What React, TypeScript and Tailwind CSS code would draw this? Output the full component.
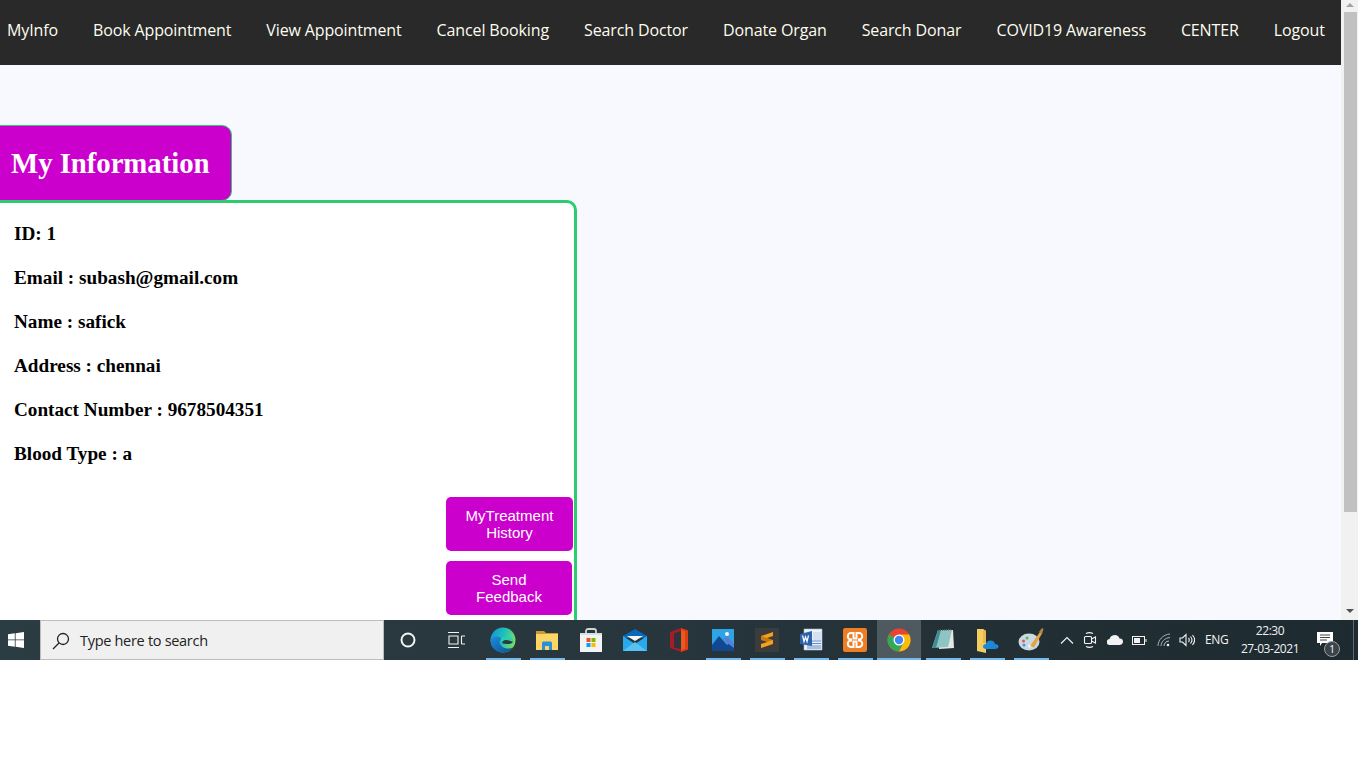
import React from "react";

const navItems = ["MyInfo","Book Appointment","View Appointment","Cancel Booking","Search Doctor","Donate Organ","Search Donar","COVID19 Awareness","CENTER","Logout"];
const info = ["ID: 1","Email : subash@gmail.com","Name : safick","Address : chennai","Contact Number : 9678504351","Blood Type : a"];

const Edge = () => (
  <svg width="26" height="26" viewBox="0 0 26 26">
    <defs>
      <linearGradient id="e1" x1="0" y1="0.2" x2="1" y2="0.5"><stop offset="0" stopColor="#1593dd"/><stop offset="0.55" stopColor="#22c3b4"/><stop offset="1" stopColor="#7ddb62"/></linearGradient>
      <linearGradient id="e2" x1="0" y1="0" x2="1" y2="1"><stop offset="0" stopColor="#1c8fdc"/><stop offset="1" stopColor="#0c4f96"/></linearGradient>
    </defs>
    <circle cx="13" cy="13" r="12.500" fill="url(#e1)"/>
    <path d="M.5 13C.5 20 6 25.500 13 25.500c4 0 7.500-1.800 10-5-3 1.500-8 1.500-11-1-3-2.500-3-6-.5-8C9 8.500 3 8.500.5 13z" fill="url(#e2)"/>
    <path d="M11.500 11.500c2-2 7-2.500 10-.5 1.500 1 2 2.500 1.500 4-2-2-5-3-7.500-2.500-1.500.3-2.500 1.500-2.500 3-.8-1.200-2-2.500-1.500-4z" fill="#25d0b8"/>
    <path d="M12 16c.5-2 2-3 4-3 2.500 0 5 1 7 2-1 1.500-3 2-5 2-2.500 0-4.500-.3-6-1z" fill="#2a3a42"/>
  </svg>
);
const Folder = () => (
  <svg width="24" height="24" viewBox="0 0 24 24">
    <path d="M1 3h8l2 2h12v3H1z" fill="#c99a33"/>
    <rect x="1" y="6" width="22" height="16" fill="#fbd568"/>
    <path d="M7 22v-7a1.500 1.500 0 0 1 1.500-1.500h7A1.500 1.500 0 0 1 17 15v7h-3v-4h-4v4z" fill="#2d8fd5"/>
  </svg>
);
const Store = () => (
  <svg width="24" height="26" viewBox="0 0 24 26">
    <path d="M7 7V4a2 2 0 0 1 2-2h6a2 2 0 0 1 2 2v3" fill="none" stroke="#d4d4d4" strokeWidth="1.800"/>
    <rect x="1" y="6" width="22" height="19" fill="#f3f3f3"/>
    <rect x="1" y="6" width="22" height="2" fill="#dedede"/>
    <rect x="7.500" y="11" width="4" height="4" fill="#f25022"/>
    <rect x="12.500" y="11" width="4" height="4" fill="#7fba00"/>
    <rect x="7.500" y="16" width="4" height="4" fill="#00a4ef"/>
    <rect x="12.500" y="16" width="4" height="4" fill="#ffb900"/>
  </svg>
);
const Mail = () => (
  <svg width="24" height="24" viewBox="0 0 24 24">
    <path d="M0 8 12 1l12 7v2H0z" fill="#0a68b8"/>
    <path d="M4 8h16l-8 5z" fill="#f4f7fa"/>
    <path d="M0 8l12 8 12-8v15H0z" fill="#27a9ec"/>
    <path d="M0 23 12 14l12 9z" fill="#58c1f2"/>
  </svg>
);
const Office = () => (
  <svg width="20" height="24" viewBox="0 0 20 24">
    <path d="M12 0 1 4v16l11 4 7-2.500v-19z" fill="#a81a2a"/>
    <path d="M12 0l7 2.500v19L12 24z" fill="#dc3e15"/>
    <path d="M12 3 12 21 5 19.500V5.500z" fill="#2a363c"/>
    <path d="M12 2l4 1.500v17L12 22z" fill="#ea5a1c"/>
  </svg>
);
const Photos = () => (
  <svg width="22" height="22" viewBox="0 0 22 22">
    <rect width="22" height="22" fill="#2ea3e6"/>
    <circle cx="15" cy="5" r="2" fill="#f3f7fa"/>
    <path d="M0 16 7 7l8 9 3-3 4 4v5H0z" fill="#11488f"/>
    <path d="M11 11l4-4 7 8v4z" fill="#5c7ed0"/>
  </svg>
);
const Sublime = () => (
  <svg width="24" height="24" viewBox="0 0 24 24">
    <rect width="24" height="24" rx="1" fill="#3c3c3c"/>
    <path d="M18 4v4L6 12V8z" fill="#f7a11a"/>
    <path d="M6 8v4l12 4v-4z" fill="#c77c10"/>
    <path d="M18 12v4L6 20v-4z" fill="#f7a11a"/>
  </svg>
);
const Word = () => (
  <svg width="24" height="24" viewBox="0 0 24 24">
    <path d="M5 1h18v21H5z" fill="#eef2f8" stroke="#a9bcd8" strokeWidth=".6"/>
    <path d="M12 13h10M12 15.500h10M8 18h14M8 20h14" stroke="#5f8ec9" strokeWidth="1"/>
    <path d="M1 6l12-3v15L1 16z" fill="#2f62ad"/>
    <path d="M14 4h8v8h-8z" fill="#d4e1f2"/>
    <path d="M3.500 7.500l1.500 6 1.500-4.500 1.500 4.500 1.500-6" fill="none" stroke="#fff" strokeWidth="1.200"/>
  </svg>
);
const Xampp = () => (
  <svg width="24" height="24" viewBox="0 0 24 24">
    <rect width="24" height="24" rx="2" fill="#ef7d24"/>
    <path d="M8 5h2.500v5.500h3V5H16a3 3 0 0 1 0 6.500v1A3 3 0 0 1 16 19h-2.500v-5.500h-3V19H8a3 3 0 0 1 0-6.500v-1A3 3 0 0 1 8 5z" fill="none" stroke="#fff" strokeWidth="2"/>
  </svg>
);
const Chrome = () => (
  <svg width="24" height="24" viewBox="0 0 24 24">
    <circle cx="12" cy="12" r="11.500" fill="#ea4335"/>
    <path d="M12 12 2 6.200A11.500 11.500 0 0 0 12 23.500l5.800-10z" fill="#34a853"/>
    <path d="M12 6.500h10.200A11.500 11.500 0 0 1 12 23.500L17 14z" fill="#fbbc05"/>
    <circle cx="12" cy="12" r="5.500" fill="#fff"/>
    <circle cx="12" cy="12" r="4.200" fill="#4285f4"/>
  </svg>
);
const Notes = () => (
  <svg width="24" height="24" viewBox="0 0 24 24">
    <path d="M7 3l15-1 1 18-15 1z" fill="#e6e8e6"/>
    <path d="M7 2l14 0-4 17-16 1z" fill="#8fc4c4"/>
    <path d="M1 20 7 2l3 0L5 20z" fill="#3f8f92"/>
    <path d="M7 2.500l14-1" stroke="#666" strokeWidth="1.400" strokeDasharray="1 1"/>
  </svg>
);
const Sticky = () => (
  <svg width="24" height="26" viewBox="0 0 24 26">
    <path d="M2 2h6l3 2v22l-9-2z" fill="#f4cd62"/>
    <path d="M8 2l3 2v12H8z" fill="#e8ba4c"/>
    <path d="M11 22c-2 0-3-1-3-2.500S9.500 17 11 17c.5-2 2-3.500 4.500-3.500S19.500 15 20 17c2 0 3.500 1 3.500 2.500S22 22 20 22z" fill="#1e88d8"/>
  </svg>
);
const Palette = () => (
  <svg width="26" height="26" viewBox="0 0 26 26">
    <ellipse cx="11" cy="15" rx="10.500" ry="8.500" fill="#c9d8e3"/>
    <circle cx="5.500" cy="14" r="1.500" fill="#e2574c"/>
    <circle cx="9" cy="11" r="1.500" fill="#5cb85c"/>
    <circle cx="6" cy="18" r="1.500" fill="#4a90d9"/>
    <ellipse cx="12" cy="19" rx="2" ry="1.500" fill="#f3f6f8"/>
    <path d="M12 19 22 5l2 1.500-8 14z" fill="#e8a33d"/>
    <path d="M21 5l3-4 1.500 1-1.500 5z" fill="#b98349"/>
  </svg>
);

const apps: { icon: React.ReactNode; active?: boolean; line: boolean }[] = [
  { icon: <Edge />, line: true },
  { icon: <Folder />, line: true },
  { icon: <Store />, line: false },
  { icon: <Mail />, line: false },
  { icon: <Office />, line: false },
  { icon: <Photos />, line: true },
  { icon: <Sublime />, line: true },
  { icon: <Word />, line: true },
  { icon: <Xampp />, line: true },
  { icon: <Chrome />, line: true, active: true },
  { icon: <Notes />, line: true },
  { icon: <Sticky />, line: true },
  { icon: <Palette />, line: true },
];

export default function App() {
  return (
    <div className="w-[1366px] h-[768px] bg-white overflow-hidden">
      <div className="w-[1358px] h-[660px] flex flex-col">
        <div className="h-[620px] flex">
          <div className="w-[1341px] h-[620px] bg-[#f8f9ff] overflow-hidden flex flex-col">
            <nav className="h-[65px] shrink-0 bg-[#292929] flex items-center pl-[7px] pb-[6px] gap-[35px] text-[16px] text-[#fdfdf0] whitespace-nowrap font-['Open_Sans',sans-serif] tracking-[-0.125px]">
              {navItems.map((n) => (<span key={n}>{n}</span>))}
            </nav>
            <div className="mt-[60px] -ml-[10px] w-[242px] h-[76px] shrink-0 bg-[#cc00cc] border border-[#2ecc71] rounded-[10px] flex items-center pl-[20px] pt-[2px] -mb-px">
              <h1 className="text-[28.8px] font-bold text-white font-['Liberation_Serif',serif] whitespace-nowrap tracking-[-0.05px]">My Information</h1>
            </div>
            <div className="-ml-[10px] w-[587px] h-[500px] shrink-0 bg-white border-[3px] border-[#2ecc71] rounded-[10px] pl-[21px] pt-[20px] font-['Liberation_Serif',serif]">
              {info.map((t) => (
                <p key={t} className="text-[19.2px] leading-[22px] font-bold text-black mb-[22px] whitespace-nowrap">{t}</p>
              ))}
              <div className="flex flex-col items-start gap-[10px] ml-[432px] mt-[32px] font-['Liberation_Sans',sans-serif] text-[15px] leading-[17px] text-white text-center">
                <button className="w-[127px] h-[54px] bg-[#cc00cc] rounded-[5px]">MyTreatment<br />History</button>
                <button className="w-[126px] h-[54px] bg-[#cc00cc] rounded-[5px]">Send<br />Feedback</button>
              </div>
            </div>
          </div>
          <div className="w-[17px] h-[620px] bg-[#f1f1f1] flex flex-col items-center pl-[1px]">
            <svg width="16" height="12" viewBox="0 0 16 12" className="shrink-0"><path d="M4 7l4-4 4 4z" fill="#a3a3a3" /></svg>
            <div className="w-[13px] h-[500px] shrink-0 bg-[#c1c1c1]" />
            <div className="flex-1" />
            <svg width="16" height="17" viewBox="0 0 16 17" className="shrink-0"><path d="M4 6l4 4 4-4z" fill="#505050" /></svg>
          </div>
        </div>
        <div className="relative h-[40px] flex items-center bg-gradient-to-r from-[#2b3c43] via-[#27363c] to-[#1d2a30] text-white font-['Open_Sans',sans-serif]">
          <div className="w-[40px] h-[40px] flex items-center pl-[8px]">
            <svg width="16" height="16" viewBox="0 0 16 16" fill="#fff"><path d="M0 2.300 6.800 1.300v6.200H0zM7.600 1.200 16 0v7.500H7.600zM0 8.300h6.800v6.400L0 13.700zM7.600 8.300H16V16l-8.400-1.200z" /></svg>
          </div>
          <div className="w-[344px] h-[40px] bg-[#f0f0f0] border border-[#bdbdbd] flex items-center pl-[11px] pt-[1px] text-[#222] text-[14.500px] tracking-[-0.3px]">
            <svg width="18" height="18" viewBox="0 0 18 18" fill="none" stroke="#222" strokeWidth="1.300"><circle cx="11" cy="7" r="5.500" /><path d="M7 11 1 17" /></svg>
            <span className="ml-[10px]">Type here to search</span>
          </div>
          <div className="w-[48px] flex justify-center">
            <svg width="16" height="16" viewBox="0 0 16 16" fill="none" stroke="#f2f2f2" strokeWidth="2"><circle cx="8" cy="8" r="6.500" /></svg>
          </div>
          <div className="w-[48px] flex justify-center">
            <svg width="18" height="16" viewBox="0 0 18 16" fill="none" stroke="#f2f2f2" strokeWidth="1.100"><path d="M1 .5h11M1 15.500h11M2 4h9v8H2zM14.500 4H18M14.500 12H18M14.500 4v8" /></svg>
          </div>
          <div className="flex h-[40px] ml-[1px]">
            {apps.map((a, i) => (
              <div key={i} className={`relative w-[44px] h-[40px] flex items-center justify-center ${a.active ? "bg-[#4f5a60]" : ""}`}>
                {a.icon}
                {a.line && <span className={`absolute bottom-0 h-[2px] bg-[#76b9ed] ${a.active ? "left-0 right-0" : "left-[5px] right-[4px]"}`} />}
              </div>
            ))}
          </div>
          <div className="flex items-center ml-[7px] text-[#f2f2f2]">
            <svg width="14" height="8" viewBox="0 0 14 8" fill="none" stroke="#f2f2f2" strokeWidth="1.200"><path d="M1 7.500 7 1.500l6 6" /></svg>
            <svg className="ml-[9px]" width="14" height="16" viewBox="0 0 14 16" fill="none" stroke="#f2f2f2" strokeWidth="1.100"><path d="M3 1.500c2-1 5-1 7 0M3 14.500c2 1 5 1 7 0" /><rect x="1.500" y="4.500" width="7" height="7" rx="1" /><path d="M8.500 7l4-2v6l-4-2" /></svg>
            <svg className="ml-[10px]" width="16" height="10" viewBox="0 0 16 10" fill="#f2f2f2"><path d="M3 10a3 3 0 0 1-.5-6C3.200 1.500 5.500 0 8 0c2.200 0 4 1.300 4.500 3.500A3.200 3.200 0 0 1 13 10z" /></svg>
            <svg className="ml-[9px]" width="15" height="9" viewBox="0 0 15 9" fill="none" stroke="#f2f2f2"><rect x=".5" y=".5" width="12" height="8" /><rect x="2" y="2" width="6" height="5" fill="#f2f2f2" stroke="none" /><path d="M14 3v3" /></svg>
            <svg className="ml-[10px]" width="14" height="14" viewBox="0 0 14 14" fill="none" stroke="#dfe3e5"><path d="M1 13C1 7 6 1.500 13 1" opacity=".7" /><path d="M4 13c0-4 3.500-8 9-8.500" opacity=".7" /><path d="M7 13c0-2.500 2-5 5-5" opacity=".8" /><circle cx="11" cy="12" r="1.300" fill="#f2f2f2" stroke="none" /></svg>
            <svg className="ml-[8px]" width="16" height="14" viewBox="0 0 16 14" fill="none" stroke="#f2f2f2" strokeWidth="1.100"><path d="M1 5v4h2.500L7 12.500v-11L3.500 5zM9.500 5c1 1 1 3 0 4M11.500 3.500c1.700 2 1.700 5 0 7M13.500 2c2.500 3 2.500 7 0 10" /></svg>
            <span className="ml-[10px] text-[12px] tracking-[-0.3px] w-[26px]">ENG</span>
            <div className="ml-[7px] w-[64px] text-center text-[12px] leading-[18px] tracking-[-0.45px]"><div>22:30</div><div>27-03-2021</div></div>
            <div className="relative ml-[15px] w-[20px] h-[20px]">
              <svg width="17" height="15" viewBox="0 0 17 15" className="absolute left-0 top-[2px]"><path d="M0 0h16v11H5l-2 3v-3H0z" fill="#fff" /><path d="M3 3h10M3 5.500h10M3 8h7" stroke="#444" strokeWidth="1" /></svg>
              <span className="absolute left-[7px] top-[11px] w-[16px] h-[16px] rounded-full bg-[#3a4449] border border-[#9aa0a3] text-[10px] leading-[14px] text-center text-white">1</span>
            </div>
          </div>
          <span className="absolute right-[4px] top-0 h-[40px] w-px bg-[#5f6a70]" />
        </div>
      </div>
    </div>
  );
}
